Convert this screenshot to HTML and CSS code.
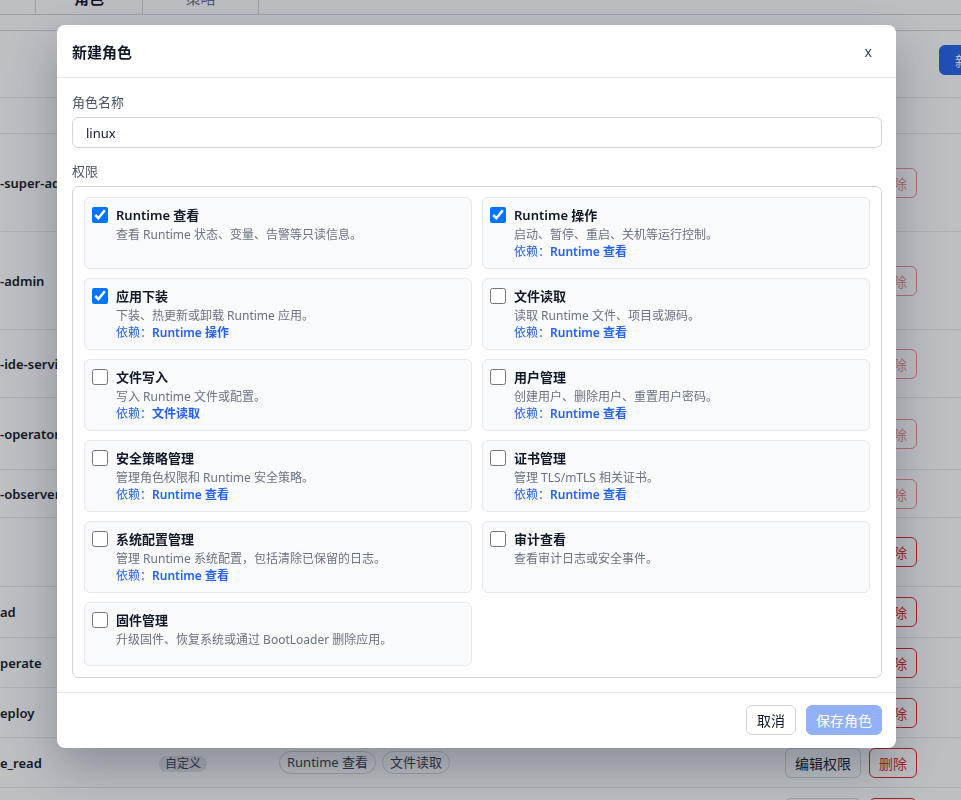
FILE: index.html
```html
<!DOCTYPE html>
<html lang="zh-CN">
<head>
    <meta charset="UTF-8">
    <meta name="viewport" content="width=device-width, initial-scale=1.0">
    <title>角色管理</title>
    <link rel="stylesheet" href="styles.css">
</head>
<body>
    <div class="page">
        <nav class="tabs">
            <span class="tab tab-lead"></span>
            <span class="tab active">角色</span>
            <span class="tab tab-wide">策略</span>
        </nav>

        <section class="panel">
            <div class="panel-head">
                <button class="btn btn-primary">新建角色</button>
            </div>

            <div class="table">
                <div class="row thead">
                    <span>名称</span><span>类型</span><span>权限</span><span>操作</span>
                </div>
                <div class="row h98">
                    <span class="name">-super-admin</span>
                    <span><span class="badge">内置</span></span>
                    <span class="tags"><span class="tag">全部权限</span></span>
                    <span class="actions"><button class="btn">编辑权限</button><button class="btn btn-danger" disabled>删除</button></span>
                </div>
                <div class="row h98">
                    <span class="name">-admin</span>
                    <span><span class="badge">内置</span></span>
                    <span class="tags"><span class="tag">Runtime 查看</span><span class="tag">Runtime 操作</span></span>
                    <span class="actions"><button class="btn">编辑权限</button><button class="btn btn-danger" disabled>删除</button></span>
                </div>
                <div class="row h68">
                    <span class="name">-ide-service</span>
                    <span><span class="badge">内置</span></span>
                    <span class="tags"><span class="tag">应用下装</span></span>
                    <span class="actions"><button class="btn">编辑权限</button><button class="btn btn-danger" disabled>删除</button></span>
                </div>
                <div class="row h72">
                    <span class="name">-operator</span>
                    <span><span class="badge">内置</span></span>
                    <span class="tags"><span class="tag">Runtime 操作</span></span>
                    <span class="actions"><button class="btn">编辑权限</button><button class="btn btn-danger" disabled>删除</button></span>
                </div>
                <div class="row h48">
                    <span class="name">-observer</span>
                    <span><span class="badge">内置</span></span>
                    <span class="tags"><span class="tag">Runtime 查看</span></span>
                    <span class="actions"><button class="btn">编辑权限</button><button class="btn btn-danger" disabled>删除</button></span>
                </div>
                <div class="row h69">
                    <span class="name"></span>
                    <span><span class="badge">自定义</span></span>
                    <span class="tags"><span class="tag">文件写入</span></span>
                    <span class="actions"><button class="btn">编辑权限</button><button class="btn btn-danger">删除</button></span>
                </div>
                <div class="row h51">
                    <span class="name">ad</span>
                    <span><span class="badge">自定义</span></span>
                    <span class="tags"><span class="tag">Runtime 查看</span></span>
                    <span class="actions"><button class="btn">编辑权限</button><button class="btn btn-danger">删除</button></span>
                </div>
                <div class="row h50">
                    <span class="name">perate</span>
                    <span><span class="badge">自定义</span></span>
                    <span class="tags"><span class="tag">Runtime 操作</span></span>
                    <span class="actions"><button class="btn">编辑权限</button><button class="btn btn-danger">删除</button></span>
                </div>
                <div class="row h50">
                    <span class="name">eploy</span>
                    <span><span class="badge">自定义</span></span>
                    <span class="tags"><span class="tag">应用下装</span></span>
                    <span class="actions"><button class="btn">编辑权限</button><button class="btn btn-danger">删除</button></span>
                </div>
                <div class="row h50">
                    <span class="name">e_read</span>
                    <span><span class="badge">自定义</span></span>
                    <span class="tags"><span class="tag">Runtime 查看</span><span class="tag">文件读取</span></span>
                    <span class="actions"><button class="btn">编辑权限</button><button class="btn btn-danger">删除</button></span>
                </div>
                <div class="row h50">
                    <span class="name">e_write</span>
                    <span><span class="badge">自定义</span></span>
                    <span class="tags"><span class="tag">文件写入</span></span>
                    <span class="actions"><button class="btn">编辑权限</button><button class="btn btn-danger">删除</button></span>
                </div>
            </div>
        </section>
    </div>

    <div class="overlay">
        <div class="modal">
            <div class="modal-head">
                <h3>新建角色</h3>
                <button class="close">x</button>
            </div>

            <div class="modal-body">
                <label class="field-label" for="role-name">角色名称</label>
                <input class="input" id="role-name" value="linux">

                <div class="field-label">权限</div>
                <div class="perm-box">
                    <label class="perm">
                        <input type="checkbox" checked>
                        <span class="perm-text">
                            <span class="perm-title">Runtime 查看</span>
                            <span class="desc">查看 Runtime 状态、变量、告警等只读信息。</span>
                        </span>
                    </label>
                    <label class="perm">
                        <input type="checkbox" checked>
                        <span class="perm-text">
                            <span class="perm-title">Runtime 操作</span>
                            <span class="desc">启动、暂停、重启、关机等运行控制。</span>
                            <span class="dep">依赖：<b>Runtime 查看</b></span>
                        </span>
                    </label>
                    <label class="perm">
                        <input type="checkbox" checked>
                        <span class="perm-text">
                            <span class="perm-title">应用下装</span>
                            <span class="desc">下装、热更新或卸载 Runtime 应用。</span>
                            <span class="dep">依赖：<b>Runtime 操作</b></span>
                        </span>
                    </label>
                    <label class="perm">
                        <input type="checkbox">
                        <span class="perm-text">
                            <span class="perm-title">文件读取</span>
                            <span class="desc">读取 Runtime 文件、项目或源码。</span>
                            <span class="dep">依赖：<b>Runtime 查看</b></span>
                        </span>
                    </label>
                    <label class="perm">
                        <input type="checkbox">
                        <span class="perm-text">
                            <span class="perm-title">文件写入</span>
                            <span class="desc">写入 Runtime 文件或配置。</span>
                            <span class="dep">依赖：<b>文件读取</b></span>
                        </span>
                    </label>
                    <label class="perm">
                        <input type="checkbox">
                        <span class="perm-text">
                            <span class="perm-title">用户管理</span>
                            <span class="desc">创建用户、删除用户、重置用户密码。</span>
                            <span class="dep">依赖：<b>Runtime 查看</b></span>
                        </span>
                    </label>
                    <label class="perm">
                        <input type="checkbox">
                        <span class="perm-text">
                            <span class="perm-title">安全策略管理</span>
                            <span class="desc">管理角色权限和 Runtime 安全策略。</span>
                            <span class="dep">依赖：<b>Runtime 查看</b></span>
                        </span>
                    </label>
                    <label class="perm">
                        <input type="checkbox">
                        <span class="perm-text">
                            <span class="perm-title">证书管理</span>
                            <span class="desc">管理 TLS/mTLS 相关证书。</span>
                            <span class="dep">依赖：<b>Runtime 查看</b></span>
                        </span>
                    </label>
                    <label class="perm">
                        <input type="checkbox">
                        <span class="perm-text">
                            <span class="perm-title">系统配置管理</span>
                            <span class="desc">管理 Runtime 系统配置，包括清除已保留的日志。</span>
                            <span class="dep">依赖：<b>Runtime 查看</b></span>
                        </span>
                    </label>
                    <label class="perm">
                        <input type="checkbox">
                        <span class="perm-text">
                            <span class="perm-title">审计查看</span>
                            <span class="desc">查看审计日志或安全事件。</span>
                        </span>
                    </label>
                    <label class="perm">
                        <input type="checkbox">
                        <span class="perm-text">
                            <span class="perm-title">固件管理</span>
                            <span class="desc">升级固件、恢复系统或通过 BootLoader 删除应用。</span>
                        </span>
                    </label>
                </div>
            </div>

            <div class="modal-foot">
                <button class="btn btn-plain">取消</button>
                <button class="btn btn-primary" disabled>保存角色</button>
            </div>
        </div>
    </div>
</body>
</html>
```

FILE: styles.css
```css
* {
    box-sizing: border-box;
}

body {
    margin: 0;
    font-family: "Noto Sans", "Noto Sans CJK SC", sans-serif;
    color: #111827;
    background-color: #fff;
    overflow: hidden;
}

/* page behind the dialog */

.page {
    margin-top: -20px;
}

.tabs {
    display: flex;
    height: 35px;
    border-bottom: 1px solid #cfd3d9;
}

.tab {
    width: 107px;
    display: flex;
    align-items: center;
    justify-content: center;
    border-right: 1px solid #d1d5db;
    font-size: 15px;
    color: #6b7280;
}

.tab-lead {
    width: 36px;
}

.tab-wide {
    width: 116px;
}

.tab.active {
    color: #111827;
    font-weight: 600;
}

.panel {
    margin-top: 15px;
    border-top: 1px solid #d1d5db;
}

.panel-head {
    height: 66px;
    display: flex;
    justify-content: flex-end;
    align-items: flex-start;
    padding-top: 14px;
    margin-right: -66px;
}

.row {
    display: grid;
    grid-template-columns: 159px 120px 1fr auto;
    align-items: center;
    padding-right: 44px;
    border-bottom: 1px solid #e5e7eb;
    font-size: 13px;
}

.thead {
    height: 37px;
    border-top: 1px solid #e5e7eb;
    color: #6b7280;
    padding-left: 170px;
}

.thead span:first-child {
    display: none;
}

.h98 { height: 98px; }
.h72 { height: 72px; }
.h69 { height: 69px; }
.h68 { height: 68px; }
.h51 { height: 51px; }
.h50 { height: 50px; }
.h48 { height: 48px; }

.name {
    font-weight: 600;
    white-space: nowrap;
    overflow: hidden;
}

.badge {
    display: inline-block;
    padding: 0 6px;
    border-radius: 999px;
    background-color: #e5e7eb;
    color: #374151;
    font-size: 12px;
    line-height: 16px;
}

.tags {
    display: flex;
    gap: 6px;
}

.tag {
    padding: 2px 7px;
    border: 1px solid #d1d5db;
    border-radius: 999px;
    font-size: 13px;
    line-height: 17px;
    color: #374151;
    white-space: nowrap;
}

.actions {
    display: flex;
    gap: 8px;
}

.btn {
    height: 30px;
    padding: 0 9px;
    border: 1px solid #d1d5db;
    border-radius: 6px;
    background-color: #fff;
    color: #111827;
    font-family: inherit;
    font-size: 14px;
    white-space: nowrap;
}

.btn-plain {
    padding: 0 10px;
}

.btn-primary {
    padding: 0 15px;
    border-color: #2563eb;
    background-color: #2563eb;
    color: #fff;
}

.btn-primary:disabled {
    opacity: 0.5;
}

.btn-danger {
    border-color: #dc2626;
    color: #dc2626;
}

.btn-danger:disabled {
    opacity: 0.5;
}

/* dialog */

.overlay {
    position: fixed;
    top: 0;
    left: 0;
    right: 0;
    bottom: 0;
    padding: 25px 0 0 57px;
    background-color: rgba(17, 24, 39, 0.28);
}

.modal {
    width: 839px;
    background-color: #fff;
    border-radius: 8px;
    box-shadow: 0 20px 50px rgba(15, 23, 42, 0.3);
}

.modal-head {
    height: 53px;
    display: flex;
    align-items: center;
    justify-content: space-between;
    padding: 0 15px;
    border-bottom: 1px solid #e5e7eb;
}

.modal-head h3 {
    margin: 0;
    font-size: 15px;
    font-weight: 600;
}

.close {
    padding: 0 9px;
    border: 0;
    background: none;
    color: #374151;
    font-family: inherit;
    font-size: 14px;
}

.modal-body {
    padding: 14px 14px 14px 15px;
}

.field-label {
    display: block;
    margin-bottom: 5px;
    font-size: 13px;
    line-height: 20px;
    color: #4b5563;
}

.input {
    display: block;
    width: 100%;
    height: 31px;
    margin-bottom: 13px;
    padding: 0 13px;
    border: 1px solid #d1d5db;
    border-radius: 6px;
    font-family: inherit;
    font-size: 13px;
    color: #111827;
}

.perm-box {
    display: grid;
    grid-template-columns: 1fr 1fr;
    gap: 9px 10px;
    padding: 10px 11px 11px;
    border: 1px solid #d1d5db;
    border-radius: 6px;
}

.perm {
    display: flex;
    align-items: flex-start;
    gap: 8px;
    min-height: 64px;
    padding: 8px 7px 7px;
    border: 1px solid #e5e7eb;
    border-radius: 6px;
    background-color: #f9fafb;
}

.perm input {
    flex: none;
    width: 16px;
    height: 16px;
    margin: 1px 0 0;
}

.perm-text {
    display: flex;
    flex-direction: column;
    line-height: 18px;
}

.perm-title {
    font-size: 13px;
    font-weight: 600;
}

.desc {
    margin-top: 2px;
    font-size: 12px;
    color: #6b7280;
}

.dep {
    margin-top: -1px;
    font-size: 12px;
    color: #2563eb;
}

.dep b {
    font-weight: 600;
}

.modal-foot {
    display: flex;
    justify-content: flex-end;
    gap: 10px;
    padding: 12px 14px 13px;
    border-top: 1px solid #e5e7eb;
}

.modal-foot .btn-primary {
    padding: 0 9px;
}
```
